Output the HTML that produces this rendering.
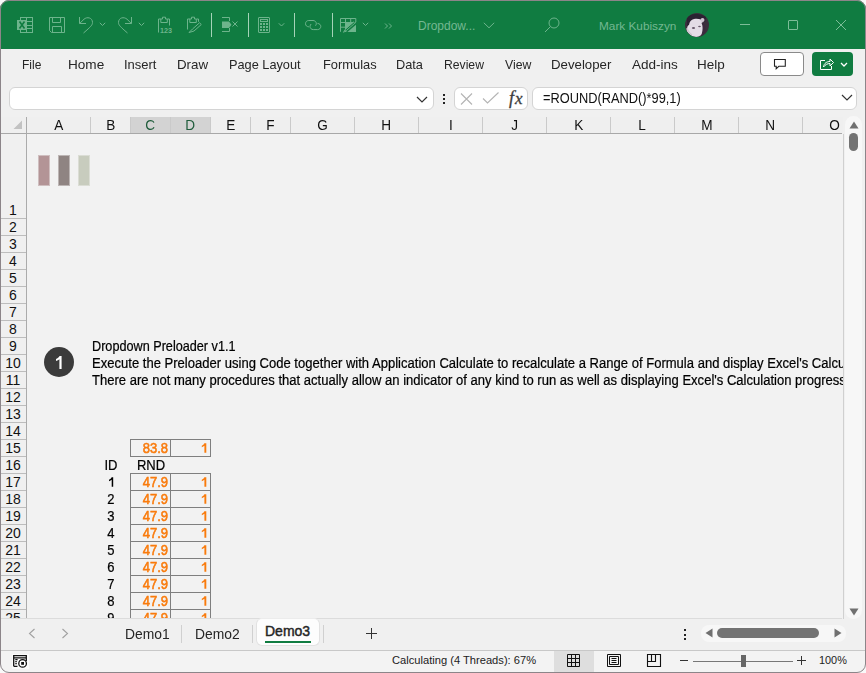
<!DOCTYPE html><html><head><meta charset="utf-8"><style>
*{margin:0;padding:0;box-sizing:border-box}
html,body{width:866px;height:673px;overflow:hidden;background:#f9f9f9;font-family:"Liberation Sans",sans-serif}
#win{position:absolute;left:0;top:0;width:866px;height:673px;border-radius:9px;overflow:hidden;background:#f0f0f0}
#bd{position:absolute;left:0;top:0;width:866px;height:673px;border:1px solid #8c8589;border-radius:9px}
.a{position:absolute}
#title{position:absolute;left:0;top:0;width:866px;height:49px;background:#107c41}
.ic{position:absolute;overflow:visible}
.ic *{stroke:#6db48c;fill:none;stroke-width:1}
.sep{position:absolute;top:13px;width:1.4px;height:24px;background:#a5d3b8}
.tt{position:absolute;color:#74b891;font-size:12px;white-space:pre;line-height:14px}
.tab{position:absolute;top:57px;font-size:13px;color:#262626;white-space:pre;line-height:16px;transform:scaleX(0.905);transform-origin:0 0}
.box{position:absolute;background:#fff;border:1px solid #d4d4d4;border-radius:6px}
.ch{position:absolute;top:117px;height:16px;border-right:1px solid #cacaca;font-size:14.4px;color:#111;text-align:center;line-height:16px}
.rh{position:absolute;left:0;width:26px;border-bottom:1px solid #bdbdbd;font-size:14px;color:#111;text-align:center}
.cell{position:absolute;font-size:12.6px;color:#000;white-space:pre;line-height:17px;-webkit-text-stroke:0.22px #000}
.org{color:#f97b0c;font-size:14px;-webkit-text-stroke:0.55px #f97b0c;transform:scaleX(0.93);transform-origin:100% 0}
.tb{position:absolute;border:1px solid #7f7f7f}
</style></head><body><div id="win">
<div id="title">
<svg class="a" style="left:0;top:0" width="866" height="49" viewBox="0 0 866 49">
<g fill="none" stroke="#6db48c" stroke-width="1">
<!-- excel -->
<rect x="20.5" y="17.5" width="12" height="15"/>
<path d="M26.5 17.5 V32.5 M20.5 21.5 H32.5 M20.5 25.5 H32.5 M20.5 28.5 H32.5"/>
<!-- save -->
<path d="M49.5 17.5 H64.5 V32.5 H51.5 L49.5 30.5 Z"/><path d="M52.5 17.5 V22.5 H60.5 V17.5"/><path d="M52.5 32.5 V26.5 H61.5 V32.5"/>
<!-- undo -->
<path d="M79.5 17 V23.5 H86"/><path d="M79.8 23.3 L84 19.2 C87 16.5 92.5 17.5 92.5 22.5 C92.5 25 91 26.5 83.5 33"/>
<path d="M99.8 22.8 L102.5 25.5 L105.2 22.8"/>
<!-- redo -->
<path d="M131.5 17 V23.5 H125"/><path d="M131.2 23.3 L127 19.2 C124 16.5 118.5 17.5 118.5 22.5 C118.5 25 120 26.5 127.5 33"/>
<path d="M138.8 22.8 L141.5 25.5 L144.2 22.8"/>
<!-- clipboard 123 -->
<path d="M158.5 32.5 V19 H161 M167.5 19 H169.5 V25.5"/><path d="M160.8 22.5 V19 H162.5 V17.2 H165.5 V19 H167.3 V22.5 Z"/>
<!-- clipboard brush -->
<path d="M187.5 29.5 V19 H190 M196.5 19 H198.5 V21.8"/><path d="M189.8 22.5 V19 H191.5 V17.2 H194.5 V19 H196.3 V22.5 Z"/>
<path d="M199.5 22.8 L201.3 24.5 L194 31 L189 32.5 L192.5 29 Z"/>
<!-- remove duplicates -->
<path d="M222 17.5 H229.5 V21 M229.5 28 V31.5 H222"/>
<path d="M232.5 21.5 L237.5 26.5 M237.5 21.5 L232.5 26.5"/>
<!-- calculator -->
<rect x="258.5" y="17.5" width="11" height="15" rx="0.5"/><rect x="260.5" y="19.5" width="7" height="2"/>
<path d="M278.8 23.3 L281.5 26 L284.2 23.3"/>
<!-- link -->
<path d="M309 26.8 H308.8 C306.9 26.8 305.5 25.5 305.5 23.7 C305.5 21.9 306.9 20.5 308.8 20.5 H313 C314.9 20.5 316.3 21.9 316.3 23.7 C316.3 24.5 316 25.2 315.5 25.7"/>
<path d="M317.5 23.4 C319.5 23.6 320.8 24.8 320.8 26.4 C320.8 28.2 319.4 29.6 317.5 29.6 H313.3 C311.4 29.6 310 28.2 310 26.4 C310 25.4 310.5 24.6 311.2 24"/>
<!-- table brush -->
<path d="M340.5 31.8 V18.5 H355.8 V22 M345.5 18.5 V31.8 M350.7 18.5 V22.5 M340.5 22.5 H355.8 M340.5 27.2 H345.5"/>
<path d="M362.8 22.8 L365.5 25.5 L368.2 22.8"/>
<path d="M385 23.5 L387.5 26 L385 28.5 M389 23.5 L391.5 26 L389 28.5"/>
</g>
<g fill="#6db48c">
<rect x="17" y="20" width="10" height="10"/>
<path d="M222 21.5 H229 L231.5 24.8 L229 28 H222 Z"/>
<rect x="260" y="23" width="2" height="2"/><rect x="263" y="23" width="2" height="2"/><rect x="266" y="23" width="2" height="2"/>
<rect x="260" y="26" width="2" height="2"/><rect x="263" y="26" width="2" height="2"/><rect x="266" y="26" width="2" height="2"/>
<rect x="260" y="29" width="2" height="2"/><rect x="263" y="29" width="2" height="2"/><rect x="266" y="29" width="2" height="2"/>
<path d="M345.5 22.5 H356 V32 H345.5 Z" />
<text x="160" y="32.6" font-family="Liberation Sans" font-size="7.6" font-weight="bold" textLength="12" lengthAdjust="spacingAndGlyphs">123</text>
</g>
<path d="M19.5 21.5 L24.5 28.5 M24.5 21.5 L19.5 28.5" stroke="#107c41" stroke-width="1.6"/>
<path d="M355.5 23 L346 31" stroke="#107c41" stroke-width="3.4"/>
<path d="M354.8 23.2 L346.3 30.6 L343.5 32.3 L345 29.5 L353.5 22 Z" fill="none" stroke="#6db48c" stroke-width="0.9"/>
</svg>
<div class="sep" style="left:211px"></div>
<div class="sep" style="left:248px"></div>
<div class="sep" style="left:294px"></div>
<div class="sep" style="left:332px"></div>
<div class="tt" style="left:418px;top:19px;font-size:12px">Dropdow...</div>
<svg class="ic" style="left:483px;top:22px" width="12" height="7" viewBox="0 0 12 7"><path d="M0.8 0.8 L6 5.8 L11.2 0.8"/></svg>
<svg class="ic" style="left:544px;top:17px" width="16" height="16" viewBox="0 0 16 16"><circle cx="10" cy="6" r="5"/><path d="M6.5 9.5 L1 15"/></svg>
<div class="tt" style="left:599px;top:19px;font-size:11.8px">Mark Kubiszyn</div>
<svg class="a" style="left:685px;top:13px" width="24" height="24" viewBox="0 0 24 24">
<defs><clipPath id="cp"><circle cx="12" cy="12" r="12"/></clipPath><filter id="bl"><feGaussianBlur stdDeviation="0.7"/></filter></defs>
<g clip-path="url(#cp)"><rect width="24" height="24" fill="#3b2f3d"/>
<g filter="url(#bl)">
<path d="M3 12 C3 7 7 4.5 12 5 C16 5.5 18 8 18.5 11 L19 17 C18 21 15 24 11 24 C7 24 3 21 1.5 17 Z" fill="#e4dce6"/>
<path d="M2 4 C6 0 16 0 21 4 L20 9 C17 6 13 5.5 9 6 C6 6.5 4.5 8.5 4 12 L2 13 Z" fill="#2a2130"/>
<path d="M18 9 C21 12 22 18 18 22 L16 23 C18 18 18 13 16.5 10 Z" fill="#3a2c3e"/>
<circle cx="17.5" cy="7" r="2" fill="#cfc4d2"/>
<ellipse cx="8.5" cy="15" rx="1.6" ry="0.9" fill="#6a5a6c"/><ellipse cx="14.5" cy="13.5" rx="1.4" ry="0.8" fill="#6a5a6c"/>
<path d="M2 15 C3 18 5 21 7 22" stroke="#cfc6d0" stroke-width="1.5" fill="none"/>
</g></g>
</svg>
<div class="a" style="left:740px;top:24px;width:10px;height:1px;background:#7dbd98"></div>
<div class="a" style="left:788px;top:20px;width:10px;height:10px;border:1px solid #7dbd98;border-radius:1px"></div>
<svg class="ic" style="left:835px;top:19px" width="12" height="12" viewBox="0 0 12 12"><path d="M1 1 L11 11 M11 1 L1 11" style="stroke:#7dbd98"/></svg>
</div>
<div class="tab" style="left:22px;transform:scaleX(0.923)">File</div>
<div class="tab" style="left:68px;transform:scaleX(1.045)">Home</div>
<div class="tab" style="left:124px;transform:scaleX(0.999)">Insert</div>
<div class="tab" style="left:177px;transform:scaleX(1.025)">Draw</div>
<div class="tab" style="left:229px;transform:scaleX(0.98)">Page Layout</div>
<div class="tab" style="left:322.5px;transform:scaleX(0.99)">Formulas</div>
<div class="tab" style="left:396px;transform:scaleX(0.982)">Data</div>
<div class="tab" style="left:444px;transform:scaleX(0.937)">Review</div>
<div class="tab" style="left:504.5px;transform:scaleX(0.942)">View</div>
<div class="tab" style="left:551px;transform:scaleX(1.019)">Developer</div>
<div class="tab" style="left:632px;transform:scaleX(1.041)">Add-ins</div>
<div class="tab" style="left:697px;transform:scaleX(1.037)">Help</div>
<div class="a" style="left:760px;top:52px;width:44px;height:24px;background:#fff;border:1px solid #8a8a8a;border-radius:4px"></div>
<svg class="a" style="left:773px;top:58px" width="16" height="14" viewBox="0 0 16 14"><path d="M1.5 1.5 H12.3 V8.3 H5.8 L3.2 10.8 V8.3 H1.5 Z" fill="none" stroke="#222" stroke-width="1.1"/></svg>
<div class="a" style="left:812px;top:52px;width:41px;height:24px;background:#107c41;border-radius:4px"></div>
<svg class="a" style="left:819px;top:57px" width="16" height="14" viewBox="0 0 16 14"><path d="M6 3.5 H1.5 V12.5 H12.5 V9" fill="none" stroke="#fff" stroke-width="1"/><path d="M4.5 10 C5 6 8 4.5 11 4.5 V2 L14.5 5.5 L11 9 V6.5 C8.5 6.5 6.5 7.5 4.5 10 Z" fill="none" stroke="#fff" stroke-width="1"/></svg>
<svg class="a" style="left:840px;top:62px" width="8" height="5" viewBox="0 0 8 5"><path d="M1 1 L4 4 L7 1" fill="none" stroke="#fff" stroke-width="1.3"/></svg>
<div class="box" style="left:9px;top:87px;width:425px;height:23px"></div>
<svg class="a" style="left:416px;top:96px" width="12" height="8" viewBox="0 0 12 8"><path d="M1 1 L6 6 L11 1" fill="none" stroke="#333" stroke-width="1.2"/></svg>
<div class="a" style="left:443px;top:94px;width:2px;height:2px;background:#222"></div>
<div class="a" style="left:443px;top:98px;width:2px;height:2px;background:#222"></div>
<div class="a" style="left:443px;top:102px;width:2px;height:2px;background:#222"></div>
<div class="box" style="left:454px;top:87px;width:74px;height:23px"></div>
<svg class="a" style="left:460px;top:93px" width="14" height="12" viewBox="0 0 14 12"><path d="M1 0.5 L12 11.5 M12 0.5 L1 11.5" fill="none" stroke="#b4b4b4" stroke-width="1.1"/></svg>
<svg class="a" style="left:482px;top:92px" width="18" height="12" viewBox="0 0 18 12"><path d="M1 6.5 L5.5 11 L16.5 0.5" fill="none" stroke="#b4b4b4" stroke-width="1.1"/></svg>
<div class="a" style="left:509px;top:89px;font-family:'Liberation Serif';font-style:italic;font-size:18px;color:#3c3c3c;line-height:18px;-webkit-text-stroke:0.3px #3c3c3c">f<span style="font-size:17px;margin-left:1px">x</span></div>
<div class="box" style="left:532px;top:87px;width:325px;height:23px"></div>
<div class="a" style="left:543px;top:91px;font-size:14px;color:#111;line-height:15px;white-space:pre;transform:scaleX(0.915);transform-origin:0 0">=ROUND(RAND()*99,1)</div>
<svg class="a" style="left:841px;top:94px" width="12" height="8" viewBox="0 0 12 8"><path d="M1 1 L6 6 L11 1" fill="none" stroke="#333" stroke-width="1.2"/></svg>
<div class="a" style="left:0;top:117px;width:843px;height:16px;background:#efefef"></div>
<div class="ch" style="left:27px;width:64px;"><span style="display:inline-block;transform:scaleX(0.944)">A</span></div>
<div class="ch" style="left:91px;width:40px;"><span style="display:inline-block;transform:scaleX(0.944)">B</span></div>
<div class="ch" style="left:131px;width:40px;background:#d3d3d3;color:#1f5c3b;"><span style="display:inline-block;transform:scaleX(0.944)">C</span></div>
<div class="ch" style="left:171px;width:40px;background:#d3d3d3;color:#1f5c3b;"><span style="display:inline-block;transform:scaleX(0.944)">D</span></div>
<div class="ch" style="left:211px;width:40px;"><span style="display:inline-block;transform:scaleX(0.944)">E</span></div>
<div class="ch" style="left:251px;width:40px;"><span style="display:inline-block;transform:scaleX(0.944)">F</span></div>
<div class="ch" style="left:291px;width:64px;"><span style="display:inline-block;transform:scaleX(0.944)">G</span></div>
<div class="ch" style="left:355px;width:64px;"><span style="display:inline-block;transform:scaleX(0.944)">H</span></div>
<div class="ch" style="left:419px;width:64px;"><span style="display:inline-block;transform:scaleX(0.944)">I</span></div>
<div class="ch" style="left:483px;width:64px;"><span style="display:inline-block;transform:scaleX(0.944)">J</span></div>
<div class="ch" style="left:547px;width:64px;"><span style="display:inline-block;transform:scaleX(0.944)">K</span></div>
<div class="ch" style="left:611px;width:64px;"><span style="display:inline-block;transform:scaleX(0.944)">L</span></div>
<div class="ch" style="left:675px;width:64px;"><span style="display:inline-block;transform:scaleX(0.944)">M</span></div>
<div class="ch" style="left:739px;width:64px;"><span style="display:inline-block;transform:scaleX(0.944)">N</span></div>
<div class="ch" style="left:803px;width:64px;"><span style="display:inline-block;transform:scaleX(0.944)">O</span></div>
<svg class="a" style="left:13px;top:120px" width="10" height="10" viewBox="0 0 10 10"><path d="M9 0.5 V9 H0.5 Z" fill="#c2c2c2"/></svg>
<div class="a" style="left:0;top:133px;width:842px;height:1px;background:#a8a8a8"></div>
<div class="a" style="left:26px;top:117px;width:1px;height:501px;background:#ababab"></div>
<div class="a" style="left:0;top:134px;width:26px;height:484px;overflow:hidden">
<div class="rh" style="top:-1px;height:86px;line-height:156px;padding-top:0"><span style="position:absolute;left:0;right:0;bottom:1px;line-height:14px">1</span></div>
<div class="rh" style="top:85px;height:17px;line-height:18px;padding-top:0"><span style="position:absolute;left:0;right:0;bottom:1px;line-height:14px">2</span></div>
<div class="rh" style="top:102px;height:17px;line-height:18px;padding-top:0"><span style="position:absolute;left:0;right:0;bottom:1px;line-height:14px">3</span></div>
<div class="rh" style="top:119px;height:17px;line-height:18px;padding-top:0"><span style="position:absolute;left:0;right:0;bottom:1px;line-height:14px">4</span></div>
<div class="rh" style="top:136px;height:17px;line-height:18px;padding-top:0"><span style="position:absolute;left:0;right:0;bottom:1px;line-height:14px">5</span></div>
<div class="rh" style="top:153px;height:17px;line-height:18px;padding-top:0"><span style="position:absolute;left:0;right:0;bottom:1px;line-height:14px">6</span></div>
<div class="rh" style="top:170px;height:17px;line-height:18px;padding-top:0"><span style="position:absolute;left:0;right:0;bottom:1px;line-height:14px">7</span></div>
<div class="rh" style="top:187px;height:17px;line-height:18px;padding-top:0"><span style="position:absolute;left:0;right:0;bottom:1px;line-height:14px">8</span></div>
<div class="rh" style="top:204px;height:17px;line-height:18px;padding-top:0"><span style="position:absolute;left:0;right:0;bottom:1px;line-height:14px">9</span></div>
<div class="rh" style="top:221px;height:17px;line-height:18px;padding-top:0"><span style="position:absolute;left:0;right:0;bottom:1px;line-height:14px">10</span></div>
<div class="rh" style="top:238px;height:17px;line-height:18px;padding-top:0"><span style="position:absolute;left:0;right:0;bottom:1px;line-height:14px">11</span></div>
<div class="rh" style="top:255px;height:17px;line-height:18px;padding-top:0"><span style="position:absolute;left:0;right:0;bottom:1px;line-height:14px">12</span></div>
<div class="rh" style="top:272px;height:17px;line-height:18px;padding-top:0"><span style="position:absolute;left:0;right:0;bottom:1px;line-height:14px">13</span></div>
<div class="rh" style="top:289px;height:17px;line-height:18px;padding-top:0"><span style="position:absolute;left:0;right:0;bottom:1px;line-height:14px">14</span></div>
<div class="rh" style="top:306px;height:17px;line-height:18px;padding-top:0"><span style="position:absolute;left:0;right:0;bottom:1px;line-height:14px">15</span></div>
<div class="rh" style="top:323px;height:17px;line-height:18px;padding-top:0"><span style="position:absolute;left:0;right:0;bottom:1px;line-height:14px">16</span></div>
<div class="rh" style="top:340px;height:17px;line-height:18px;padding-top:0"><span style="position:absolute;left:0;right:0;bottom:1px;line-height:14px">17</span></div>
<div class="rh" style="top:357px;height:17px;line-height:18px;padding-top:0"><span style="position:absolute;left:0;right:0;bottom:1px;line-height:14px">18</span></div>
<div class="rh" style="top:374px;height:17px;line-height:18px;padding-top:0"><span style="position:absolute;left:0;right:0;bottom:1px;line-height:14px">19</span></div>
<div class="rh" style="top:391px;height:17px;line-height:18px;padding-top:0"><span style="position:absolute;left:0;right:0;bottom:1px;line-height:14px">20</span></div>
<div class="rh" style="top:408px;height:17px;line-height:18px;padding-top:0"><span style="position:absolute;left:0;right:0;bottom:1px;line-height:14px">21</span></div>
<div class="rh" style="top:425px;height:17px;line-height:18px;padding-top:0"><span style="position:absolute;left:0;right:0;bottom:1px;line-height:14px">22</span></div>
<div class="rh" style="top:442px;height:17px;line-height:18px;padding-top:0"><span style="position:absolute;left:0;right:0;bottom:1px;line-height:14px">23</span></div>
<div class="rh" style="top:459px;height:17px;line-height:18px;padding-top:0"><span style="position:absolute;left:0;right:0;bottom:1px;line-height:14px">24</span></div>
<div class="rh" style="top:476px;height:17px;line-height:18px;padding-top:0"><span style="position:absolute;left:0;right:0;bottom:1px;line-height:14px">25</span></div>
<div class="rh" style="top:493px;height:17px;line-height:18px;padding-top:0"><span style="position:absolute;left:0;right:0;bottom:1px;line-height:14px">26</span></div>
</div>
<div class="a" style="left:27px;top:134px;width:816px;height:484px;overflow:hidden;background:#f2f2f2">
<div class="a" style="left:11px;top:21px;width:12px;height:31px;background:rgb(179,148,150);border:1px solid rgba(179,148,150,0.55);background-clip:padding-box"></div>
<div class="a" style="left:31px;top:21px;width:12px;height:31px;background:rgb(143,132,130);border:1px solid rgba(143,132,130,0.55);background-clip:padding-box"></div>
<div class="a" style="left:51px;top:21px;width:12px;height:31px;background:rgb(200,204,190);border:1px solid rgba(200,204,190,0.55);background-clip:padding-box"></div>
<div class="a" style="left:17px;top:213px;width:30px;height:30px;border-radius:15px;background:#3b3b3b;"><svg width="30" height="30" viewBox="0 0 30 30" style="position:absolute;left:0;top:0"><path d="M15.6 9 H17.6 V22 H15.4 V12.2 C14.6 12.9 13.4 13.6 12 14.1 V12.1 C13.5 11.5 14.8 10.4 15.6 9 Z" fill="#fff"/></svg></div>
<div class="cell" style="left:65px;top:204px;font-size:14px;transform:scaleX(0.904);transform-origin:0 0">Dropdown Preloader v1.1</div>
<div class="cell" style="left:65px;top:221px;font-size:14px;transform:scaleX(0.932);transform-origin:0 0">Execute the Preloader using Code together with Application Calculate to recalculate a Range of Formula and display Excel's Calculation progress</div>
<div class="cell" style="left:65px;top:238px;font-size:14px;transform:scaleX(0.932);transform-origin:0 0">There are not many procedures that actually allow an indicator of any kind to run as well as displaying Excel's Calculation progress on the Status Bar</div>
<div class="tb" style="left:103px;top:305px;width:41px;height:18px"></div>
<div class="tb" style="left:143px;top:305px;width:41px;height:18px"></div>
<div class="cell org" style="left:103px;top:306px;width:38px;text-align:right">83.8</div>
<svg class="a" style="left:143px;top:305px;overflow:visible" width="41" height="18" viewBox="170 439 41 18"><path d="M204.4 443.2 H206.3 V452.8 H204.4 V445.7 C203.7 446.3 202.8 446.9 201.8 447.3 V445.7 C203 445.1 203.9 444.2 204.4 443.2 Z" fill="#f97b0c"/></svg>
<div class="cell" style="left:64px;top:323px;width:40px;text-align:center;font-size:14px;transform:scaleX(0.93);transform-origin:50% 0">ID</div>
<div class="cell" style="left:104px;top:323px;width:40px;text-align:center;font-size:14px;transform:scaleX(0.93);transform-origin:50% 0">RND</div>
<div class="tb" style="left:103px;top:339px;width:41px;height:18px"></div>
<div class="tb" style="left:143px;top:339px;width:41px;height:18px"></div>
<div class="cell org" style="left:103px;top:340px;width:38px;text-align:right">47.9</div>
<svg class="a" style="left:143px;top:339px;overflow:visible" width="41" height="18" viewBox="170 473 41 18"><path d="M204.4 477.2 H206.3 V486.8 H204.4 V479.7 C203.7 480.3 202.8 480.9 201.8 481.3 V479.7 C203 479.1 203.9 478.2 204.4 477.2 Z" fill="#f97b0c"/></svg>
<svg class="a" style="left:64px;top:339px;overflow:visible" width="40" height="18" viewBox="91 473 40 18"><path d="M111.7 477.2 H113.2 V486.8 H111.7 V479.7 C111 480.3 110.1 480.9 109 481.3 V479.8 C110.3 479.1 111.2 478.2 111.7 477.2 Z" fill="#000"/></svg>
<div class="tb" style="left:103px;top:356px;width:41px;height:18px"></div>
<div class="tb" style="left:143px;top:356px;width:41px;height:18px"></div>
<div class="cell org" style="left:103px;top:357px;width:38px;text-align:right">47.9</div>
<svg class="a" style="left:143px;top:356px;overflow:visible" width="41" height="18" viewBox="170 490 41 18"><path d="M204.4 494.2 H206.3 V503.8 H204.4 V496.7 C203.7 497.3 202.8 497.9 201.8 498.3 V496.7 C203 496.1 203.9 495.2 204.4 494.2 Z" fill="#f97b0c"/></svg>
<div class="cell" style="left:64px;top:357px;width:40px;text-align:center;font-size:14px;transform:scaleX(0.93);transform-origin:50% 0">2</div>
<div class="tb" style="left:103px;top:373px;width:41px;height:18px"></div>
<div class="tb" style="left:143px;top:373px;width:41px;height:18px"></div>
<div class="cell org" style="left:103px;top:374px;width:38px;text-align:right">47.9</div>
<svg class="a" style="left:143px;top:373px;overflow:visible" width="41" height="18" viewBox="170 507 41 18"><path d="M204.4 511.2 H206.3 V520.8 H204.4 V513.7 C203.7 514.3 202.8 514.9 201.8 515.3 V513.7 C203 513.1 203.9 512.2 204.4 511.2 Z" fill="#f97b0c"/></svg>
<div class="cell" style="left:64px;top:374px;width:40px;text-align:center;font-size:14px;transform:scaleX(0.93);transform-origin:50% 0">3</div>
<div class="tb" style="left:103px;top:390px;width:41px;height:18px"></div>
<div class="tb" style="left:143px;top:390px;width:41px;height:18px"></div>
<div class="cell org" style="left:103px;top:391px;width:38px;text-align:right">47.9</div>
<svg class="a" style="left:143px;top:390px;overflow:visible" width="41" height="18" viewBox="170 524 41 18"><path d="M204.4 528.2 H206.3 V537.8 H204.4 V530.7 C203.7 531.3 202.8 531.9 201.8 532.3 V530.7 C203 530.1 203.9 529.2 204.4 528.2 Z" fill="#f97b0c"/></svg>
<div class="cell" style="left:64px;top:391px;width:40px;text-align:center;font-size:14px;transform:scaleX(0.93);transform-origin:50% 0">4</div>
<div class="tb" style="left:103px;top:407px;width:41px;height:18px"></div>
<div class="tb" style="left:143px;top:407px;width:41px;height:18px"></div>
<div class="cell org" style="left:103px;top:408px;width:38px;text-align:right">47.9</div>
<svg class="a" style="left:143px;top:407px;overflow:visible" width="41" height="18" viewBox="170 541 41 18"><path d="M204.4 545.2 H206.3 V554.8 H204.4 V547.7 C203.7 548.3 202.8 548.9 201.8 549.3 V547.7 C203 547.1 203.9 546.2 204.4 545.2 Z" fill="#f97b0c"/></svg>
<div class="cell" style="left:64px;top:408px;width:40px;text-align:center;font-size:14px;transform:scaleX(0.93);transform-origin:50% 0">5</div>
<div class="tb" style="left:103px;top:424px;width:41px;height:18px"></div>
<div class="tb" style="left:143px;top:424px;width:41px;height:18px"></div>
<div class="cell org" style="left:103px;top:425px;width:38px;text-align:right">47.9</div>
<svg class="a" style="left:143px;top:424px;overflow:visible" width="41" height="18" viewBox="170 558 41 18"><path d="M204.4 562.2 H206.3 V571.8 H204.4 V564.7 C203.7 565.3 202.8 565.9 201.8 566.3 V564.7 C203 564.1 203.9 563.2 204.4 562.2 Z" fill="#f97b0c"/></svg>
<div class="cell" style="left:64px;top:425px;width:40px;text-align:center;font-size:14px;transform:scaleX(0.93);transform-origin:50% 0">6</div>
<div class="tb" style="left:103px;top:441px;width:41px;height:18px"></div>
<div class="tb" style="left:143px;top:441px;width:41px;height:18px"></div>
<div class="cell org" style="left:103px;top:442px;width:38px;text-align:right">47.9</div>
<svg class="a" style="left:143px;top:441px;overflow:visible" width="41" height="18" viewBox="170 575 41 18"><path d="M204.4 579.2 H206.3 V588.8 H204.4 V581.7 C203.7 582.3 202.8 582.9 201.8 583.3 V581.7 C203 581.1 203.9 580.2 204.4 579.2 Z" fill="#f97b0c"/></svg>
<div class="cell" style="left:64px;top:442px;width:40px;text-align:center;font-size:14px;transform:scaleX(0.93);transform-origin:50% 0">7</div>
<div class="tb" style="left:103px;top:458px;width:41px;height:18px"></div>
<div class="tb" style="left:143px;top:458px;width:41px;height:18px"></div>
<div class="cell org" style="left:103px;top:459px;width:38px;text-align:right">47.9</div>
<svg class="a" style="left:143px;top:458px;overflow:visible" width="41" height="18" viewBox="170 592 41 18"><path d="M204.4 596.2 H206.3 V605.8 H204.4 V598.7 C203.7 599.3 202.8 599.9 201.8 600.3 V598.7 C203 598.1 203.9 597.2 204.4 596.2 Z" fill="#f97b0c"/></svg>
<div class="cell" style="left:64px;top:459px;width:40px;text-align:center;font-size:14px;transform:scaleX(0.93);transform-origin:50% 0">8</div>
<div class="tb" style="left:103px;top:475px;width:41px;height:18px"></div>
<div class="tb" style="left:143px;top:475px;width:41px;height:18px"></div>
<div class="cell org" style="left:103px;top:476px;width:38px;text-align:right">47.9</div>
<svg class="a" style="left:143px;top:475px;overflow:visible" width="41" height="18" viewBox="170 609 41 18"><path d="M204.4 613.2 H206.3 V622.8 H204.4 V615.7 C203.7 616.3 202.8 616.9 201.8 617.3 V615.7 C203 615.1 203.9 614.2 204.4 613.2 Z" fill="#f97b0c"/></svg>
<div class="cell" style="left:64px;top:476px;width:40px;text-align:center;font-size:14px;transform:scaleX(0.93);transform-origin:50% 0">9</div>
</div>
<div class="a" style="left:843px;top:134px;width:1px;height:485px;background:#d0d0d0"></div>
<div class="a" style="left:0;top:618px;width:842px;height:1px;background:#dcdcdc"></div>
<div class="a" style="left:845px;top:116px;width:17px;height:503px;background:#f7f7f7;border-radius:9px"></div>
<svg class="a" style="left:849px;top:121px" width="10" height="8" viewBox="0 0 10 8"><path d="M5 0.5 L9.5 7.5 H0.5 Z" fill="#707070"/></svg>
<div class="a" style="left:849px;top:133px;width:9px;height:18px;border-radius:5px;background:#737373"></div>
<svg class="a" style="left:849px;top:608px" width="10" height="8" viewBox="0 0 10 8"><path d="M0.5 0.5 H9.5 L5 7.5 Z" fill="#707070"/></svg>
<svg class="a" style="left:28px;top:628px" width="8" height="11" viewBox="0 0 8 11"><path d="M6.5 1 L1.5 5.5 L6.5 10" fill="none" stroke="#a0a0a0" stroke-width="1.1"/></svg>
<svg class="a" style="left:61px;top:628px" width="8" height="11" viewBox="0 0 8 11"><path d="M1.5 1 L6.5 5.5 L1.5 10" fill="none" stroke="#a0a0a0" stroke-width="1.1"/></svg>
<div class="a" style="left:125px;top:626px;font-size:14px;color:#262626;line-height:16px;transform:scaleX(0.99);transform-origin:0 0">Demo1</div>
<div class="a" style="left:181px;top:625px;width:1px;height:18px;background:#d0d0d0"></div>
<div class="a" style="left:195px;top:626px;font-size:14px;color:#262626;line-height:16px;transform:scaleX(0.99);transform-origin:0 0">Demo2</div>
<div class="a" style="left:252px;top:625px;width:1px;height:18px;background:#d0d0d0"></div>
<div class="a" style="left:256px;top:618px;width:64px;height:28px;background:#fdfdfd;border-radius:6px;border:1px solid #e2e2e2;border-top-color:#ececec"></div>
<div class="a" style="left:265px;top:623px;font-size:14px;color:#262626;line-height:16px;-webkit-text-stroke:0.45px #262626;transform:scaleX(1.0);transform-origin:0 0">Demo3</div>
<div class="a" style="left:265px;top:641px;width:46px;height:2px;background:#107c41"></div>
<div class="a" style="left:323px;top:625px;width:1px;height:18px;background:#d0d0d0"></div>
<div class="a" style="left:366px;top:633px;width:11px;height:1px;background:#333"></div>
<div class="a" style="left:371px;top:628px;width:1px;height:11px;background:#333"></div>
<div class="a" style="left:684px;top:629px;width:2px;height:2px;background:#222"></div>
<div class="a" style="left:684px;top:634px;width:2px;height:2px;background:#222"></div>
<div class="a" style="left:684px;top:638px;width:2px;height:2px;background:#222"></div>
<div class="a" style="left:701px;top:625px;width:145px;height:17px;background:#f7f7f7;border-radius:8px"></div>
<svg class="a" style="left:705px;top:628px" width="8" height="10" viewBox="0 0 8 10"><path d="M7.5 0.5 V9.5 L0.5 5 Z" fill="#707070"/></svg>
<div class="a" style="left:717px;top:628px;width:102px;height:10px;border-radius:5px;background:#737373"></div>
<svg class="a" style="left:834px;top:628px" width="8" height="10" viewBox="0 0 8 10"><path d="M0.5 0.5 V9.5 L7.5 5 Z" fill="#707070"/></svg>
<div class="a" style="left:0;top:650px;width:866px;height:1px;background:#c8c8c8"></div>
<div class="a" style="left:0;top:651px;width:866px;height:22px;background:#f3f3f3"></div>
<svg class="a" style="left:0;top:650px" width="40" height="23" viewBox="0 650 40 23"><rect x="12" y="654" width="17" height="15" fill="#fff" opacity="0.7"/><path d="M13.7 666.3 V655.7 H26.3 V661 M13.7 657.8 H26.3 M13.7 666.3 H17.5" fill="none" stroke="#111" stroke-width="1.3"/><path d="M15.3 659.6 H17.6 M15.3 661.6 H16.8 M15.3 663.6 H16.8" stroke="#111" stroke-width="1.1"/><circle cx="22.6" cy="663.4" r="3.8" fill="#fff" stroke="#111" stroke-width="1.3"/><rect x="21.2" y="662" width="2.8" height="2.8" fill="#111"/></svg>
<div class="a" style="left:392px;top:654px;font-size:11.15px;color:#222;line-height:13px;white-space:pre">Calculating (4 Threads): 67%</div>
<div class="a" style="left:554px;top:651px;width:40px;height:21px;background:#dedede"></div>
<svg class="a" style="left:566px;top:653px" width="15" height="15" viewBox="0 0 15 15"><path d="M1.5 1.5 H13.5 V13.5 H1.5 Z M1.5 5.5 H13.5 M1.5 9.5 H13.5 M5.5 1.5 V13.5 M9.5 1.5 V13.5" fill="none" stroke="#111"/></svg>
<svg class="a" style="left:606px;top:653px" width="16" height="15" viewBox="0 0 16 15"><path d="M1.5 1.5 H14.5 V13.5 H1.5 Z M3.5 3.5 H12.5 V11.5 H3.5 Z M5.5 5.5 H10.5 M5.5 7.5 H10.5 M5.5 9.5 H10.5" fill="none" stroke="#111"/></svg>
<svg class="a" style="left:646px;top:653px" width="16" height="15" viewBox="0 0 16 15"><path d="M1.5 1.5 H14.5 V13.5 H1.5 Z M1.5 8.5 H9.5 V1.5 M5.5 1.5 V8.5" fill="none" stroke="#111" stroke-width="1.1"/></svg>
<div class="a" style="left:680px;top:660px;width:8px;height:1px;background:#333"></div>
<div class="a" style="left:693px;top:661px;width:100px;height:1px;background:#777"></div>
<div class="a" style="left:741px;top:655px;width:5px;height:12px;background:#666"></div>
<div class="a" style="left:797px;top:660px;width:9px;height:1px;background:#333"></div>
<div class="a" style="left:801px;top:656px;width:1px;height:9px;background:#333"></div>
<div class="a" style="left:819px;top:654px;font-size:10.9px;color:#222;line-height:13px">100%</div>
</div><div id="bd"></div></body></html>
